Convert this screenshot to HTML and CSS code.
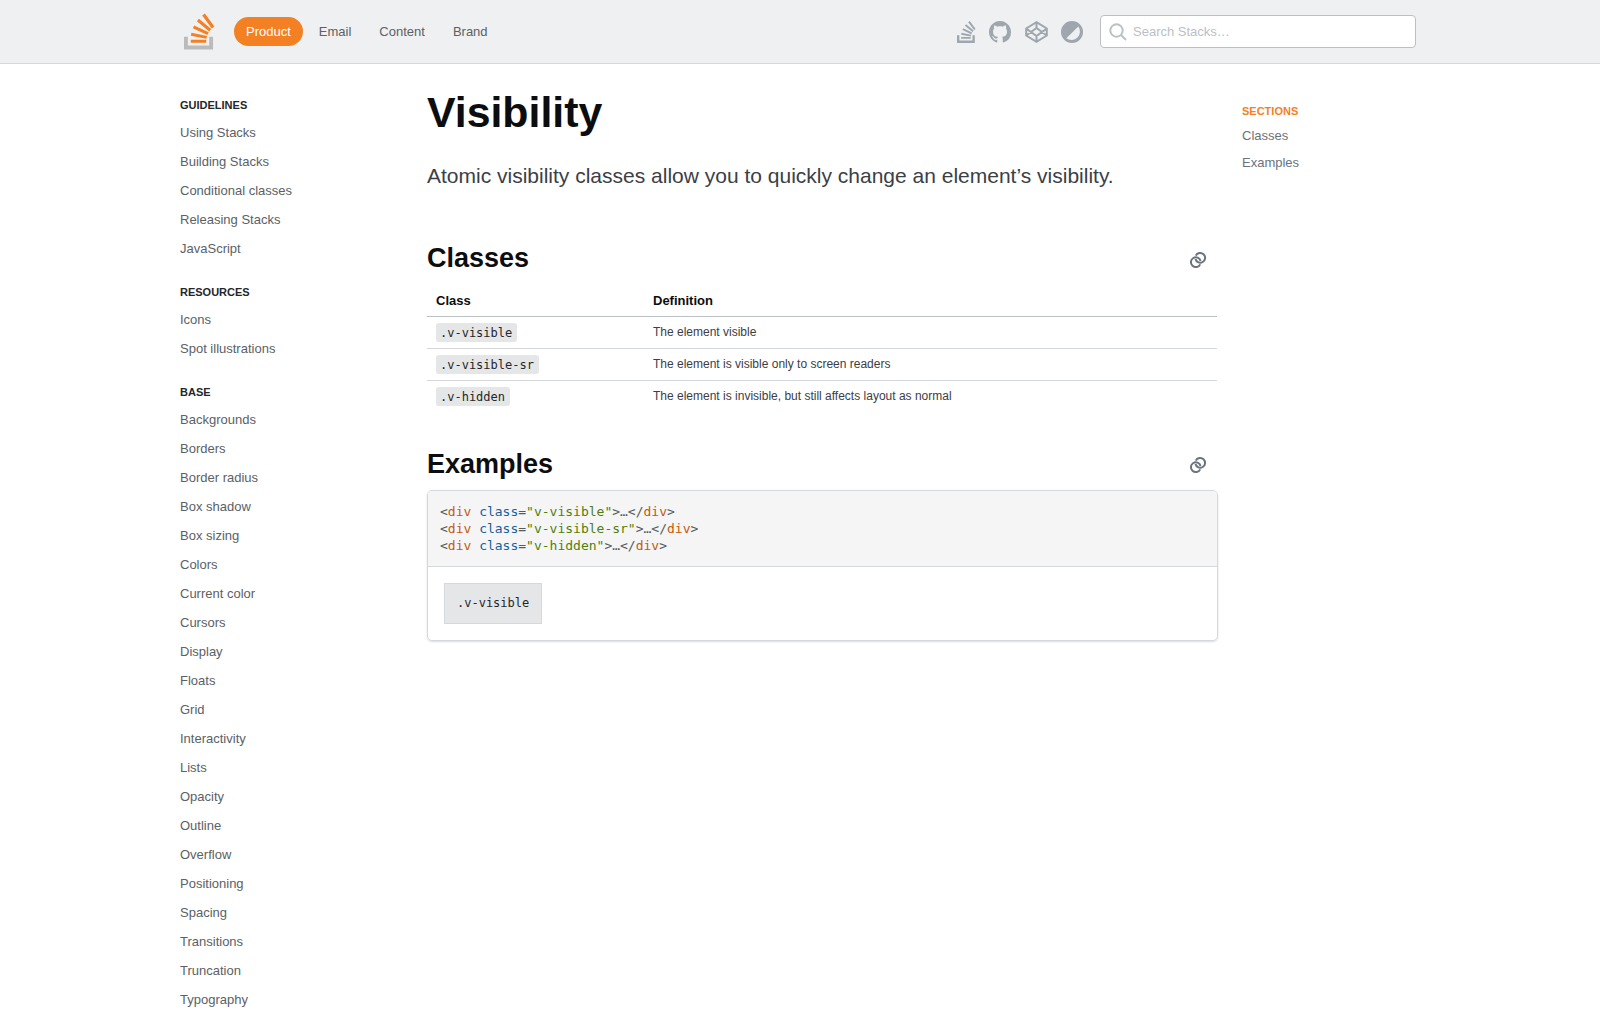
FILE: index.html
```html
<!DOCTYPE html>
<html lang="en">
<head>
    <meta charset="UTF-8">
    <meta name="viewport" content="width=device-width, initial-scale=1.0">
    <title>Visibility - Stacks</title>
    <link rel="stylesheet" href="styles.css">
</head>
<body>
    <header class="topbar">
        <div class="topbar-inner">
            <a class="logo" href="#">
                <svg width="31" height="37" viewBox="0 0 32 37"><path d="M26 33v-9h4v13H0V24h4v9h22Z" fill="#bcbbbb"/><path d="m21.5 0-2.7 2 9.9 13.3 2.7-2L21.5 0ZM26 18.4 13.3 7.8l2.1-2.5 12.7 10.6-2.1 2.5ZM9.1 15.2l15 7 1.4-3-15-7-1.4 3Zm14 10.79.68-2.95-16.1-3.35L7 23l16.1 2.99ZM23 30H7v-3h16v3Z" fill="#f48024"/></svg>
            </a>
            <nav class="topnav">
                <a class="topnav-item active" href="#">Product</a>
                <a class="topnav-item" href="#">Email</a>
                <a class="topnav-item" href="#">Content</a>
                <a class="topnav-item" href="#">Brand</a>
            </nav>
            <div class="top-icons">
                <svg class="so-icon" width="19" height="22" viewBox="0 0 32 37"><path d="M26 33v-9h4v13H0V24h4v9h22Z"/><path d="m21.5 0-2.7 2 9.9 13.3 2.7-2L21.5 0ZM26 18.4 13.3 7.8l2.1-2.5 12.7 10.6-2.1 2.5ZM9.1 15.2l15 7 1.4-3-15-7-1.4 3Zm14 10.79.68-2.95-16.1-3.35L7 23l16.1 2.99ZM23 30H7v-3h16v3Z"/></svg>
                <svg width="22" height="22" viewBox="0 0 16 16"><path d="M8 0C3.58 0 0 3.58 0 8c0 3.54 2.29 6.53 5.47 7.59.4.07.55-.17.55-.38 0-.19-.01-.82-.01-1.49-2.01.37-2.53-.49-2.69-.94-.09-.23-.48-.94-.82-1.13-.28-.15-.68-.52-.01-.53.63-.01 1.08.58 1.23.82.72 1.21 1.87.87 2.33.66.07-.52.28-.87.51-1.07-1.78-.2-3.64-.89-3.64-3.95 0-.87.31-1.59.82-2.15-.08-.2-.36-1.02.08-2.12 0 0 .67-.21 2.2.82.64-.18 1.32-.27 2-.27.68 0 1.36.09 2 .27 1.53-1.04 2.2-.82 2.2-.82.44 1.1.16 1.92.08 2.12.51.56.82 1.27.82 2.15 0 3.07-1.87 3.75-3.65 3.95.29.25.54.73.54 1.48 0 1.07-.01 1.93-.01 2.2 0 .21.15.46.55.38A8.013 8.013 0 0016 8c0-4.42-3.58-8-8-8z"/></svg>
                <svg class="pen" width="23" height="22" viewBox="0 0 23 22"><path d="M11.5 1.200 21.800 7.500v7L11.500 20.800 1.200 14.500v-7ZM11.500 1.200V7M11.500 15v5.800M1.200 7.500 11.500 15 21.800 7.500M1.200 14.500 11.500 7 21.800 14.500"/></svg>
                <svg class="contrast-icon" width="22" height="22" viewBox="0 0 22 22"><path fill-rule="evenodd" d="M11 0a11 11 0 1 1 0 22a11 11 0 0 1 0-22ZM17.300 5.400 5.400 17.300A8.500 8.500 0 0 0 17.300 5.400Z"/></svg>
            </div>
            <label class="search">
                <svg width="18" height="18" viewBox="0 0 18 18"><circle cx="7.500" cy="7.500" r="6.200"/><path d="M12 12l5 5"/></svg>
                <input type="text" placeholder="Search Stacks…">
            </label>
        </div>
    </header>

    <div class="layout">
        <aside class="sidebar">
            <h5>Guidelines</h5>
            <ul>
                <li>Using Stacks</li>
                <li>Building Stacks</li>
                <li>Conditional classes</li>
                <li>Releasing Stacks</li>
                <li>JavaScript</li>
            </ul>
            <h5>Resources</h5>
            <ul>
                <li>Icons</li>
                <li>Spot illustrations</li>
            </ul>
            <h5>Base</h5>
            <ul>
                <li>Backgrounds</li>
                <li>Borders</li>
                <li>Border radius</li>
                <li>Box shadow</li>
                <li>Box sizing</li>
                <li>Colors</li>
                <li>Current color</li>
                <li>Cursors</li>
                <li>Display</li>
                <li>Floats</li>
                <li>Grid</li>
                <li>Interactivity</li>
                <li>Lists</li>
                <li>Opacity</li>
                <li>Outline</li>
                <li>Overflow</li>
                <li>Positioning</li>
                <li>Spacing</li>
                <li>Transitions</li>
                <li>Truncation</li>
                <li>Typography</li>
                <li>Vertical alignment</li>
            </ul>
        </aside>

        <main class="content">
            <h1>Visibility</h1>
            <p class="lead">Atomic visibility classes allow you to quickly change an element’s visibility.</p>

            <div class="section-head classes-head">
                <h2>Classes</h2>
                <svg class="link-icon" width="18" height="18" viewBox="0 0 18 18"><path d="M6.780 4.680A4.900 4.900 0 1 1 6.450 8.020"/><path d="M11.220 13.320A4.900 4.900 0 1 1 11.550 9.980"/></svg>
            </div>
            <table class="class-table">
                <thead>
                    <tr><th class="col-class">Class</th><th>Definition</th></tr>
                </thead>
                <tbody>
                    <tr><td><code>.v-visible</code></td><td>The element visible</td></tr>
                    <tr><td><code>.v-visible-sr</code></td><td>The element is visible only to screen readers</td></tr>
                    <tr><td><code>.v-hidden</code></td><td>The element is invisible, but still affects layout as normal</td></tr>
                </tbody>
            </table>

            <div class="section-head examples-head">
                <h2>Examples</h2>
                <svg class="link-icon" width="18" height="18" viewBox="0 0 18 18"><path d="M6.780 4.680A4.900 4.900 0 1 1 6.450 8.020"/><path d="M11.220 13.320A4.900 4.900 0 1 1 11.550 9.980"/></svg>
            </div>
            <div class="example">
<pre class="example-code">&lt;<span class="tag">div</span> <span class="attr">class</span>=<span class="str">"v-visible"</span>&gt;…&lt;/<span class="tag">div</span>&gt;
&lt;<span class="tag">div</span> <span class="attr">class</span>=<span class="str">"v-visible-sr"</span>&gt;…&lt;/<span class="tag">div</span>&gt;
&lt;<span class="tag">div</span> <span class="attr">class</span>=<span class="str">"v-hidden"</span>&gt;…&lt;/<span class="tag">div</span>&gt;</pre>
                <div class="example-demo">
                    <div class="demo-box">.v-visible</div>
                </div>
            </div>
        </main>

        <aside class="toc">
            <h5>Sections</h5>
            <a href="#">Classes</a>
            <a href="#">Examples</a>
        </aside>
    </div>
</body>
</html>
```

FILE: styles.css
```css
html, body {
    height: 100%;
    overflow: hidden;
}
body {
    margin: 0;
    font-family: "Liberation Sans", Arial, sans-serif;
    color: #0c0d0e;
    background-color: #fff;
}
a {
    text-decoration: none;
}
.topbar {
    height: 63px;
    background-color: #eff0f1;
    border-bottom: 1px solid #d6d9dc;
}
.topbar-inner {
    width: 1236px;
    height: 100%;
    margin-left: 180px;
    display: flex;
    align-items: center;
}
.logo {
    display: flex;
    margin-left: 4px;
}
.topnav {
    display: flex;
    align-items: center;
    margin-left: 19px;
}
.topnav-item {
    font-size: 13px;
    line-height: 15px;
    padding: 7px 12px;
    margin-right: 4px;
    border-radius: 15px;
    color: #5a6167;
}
.topnav-item.active {
    background-color: #f48024;
    color: #fff;
}
.top-icons {
    margin-left: auto;
    display: flex;
    align-items: center;
    gap: 14px;
    fill: #9fa6ad;
}
.so-icon {
    margin-right: -1px;
}
.contrast-icon {
    margin-left: -1px;
}
.pen {
    fill: none;
    stroke: #9fa6ad;
    stroke-width: 2;
}
.search {
    width: 316px;
    height: 33px;
    box-sizing: border-box;
    margin-left: 17px;
    display: flex;
    align-items: center;
    gap: 6px;
    padding-left: 8px;
    background-color: #fff;
    border: 1px solid #bbc0c4;
    border-radius: 4px;
}
.search svg {
    fill: none;
    stroke: #bbc0c4;
    stroke-width: 2;
}
.search input {
    flex: 1;
    border: none;
    outline: none;
    padding: 0;
    font: 13px "Liberation Sans", Arial, sans-serif;
}
.search input::placeholder {
    color: #bbc0c4;
}
.layout {
    margin-left: 180px;
    display: flex;
}
.sidebar {
    width: 247px;
    padding-top: 34px;
}
.sidebar h5,
.toc h5 {
    margin: 0;
    font-size: 11px;
    line-height: 15px;
    font-weight: bold;
    text-transform: uppercase;
}
.sidebar h5 {
    color: #242729;
}
.sidebar ul {
    list-style: none;
    margin: 5px 0 22px;
    padding: 0;
}
.sidebar li {
    font-size: 13px;
    line-height: 15px;
    padding: 7px 0;
    color: #5a6167;
}
.content {
    width: 790px;
}
h1 {
    margin: 21px 0 0;
    font-size: 42.8px;
    line-height: 54px;
    font-weight: bold;
}
.lead {
    margin: 22px 0 0;
    font-size: 21px;
    line-height: 29px;
    color: #3b4045;
}
.section-head {
    display: flex;
    align-items: center;
    justify-content: space-between;
    padding-right: 10px;
}
.classes-head {
    margin-top: 50px;
}
.examples-head {
    margin-top: 34px;
}
h2 {
    margin: 0;
    font-size: 27px;
    line-height: 36px;
    font-weight: bold;
}
.link-icon {
    margin-top: 4px;
    fill: none;
    stroke: #6a737c;
    stroke-width: 2;
}
.examples-head .link-icon {
    margin-top: 2px;
}
.class-table {
    width: 100%;
    margin-top: 8px;
    border-collapse: collapse;
    font-size: 12px;
}
.class-table th {
    font-size: 13px;
    line-height: 15px;
    text-align: left;
    padding: 9px 9px 8px;
    border-bottom: 1px solid #bbc0c4;
}
.col-class {
    width: 199px;
}
.class-table td {
    line-height: 15px;
    padding: 8px 9px 6px;
    vertical-align: top;
    color: #3b4045;
    border-bottom: 1px solid #d6d9dc;
}
.class-table td:first-child {
    padding-top: 6px;
}
.class-table tr:last-child td {
    border-bottom: none;
}
code {
    display: inline-block;
    vertical-align: top;
    font: 12px/15px "DejaVu Sans Mono", monospace;
    color: #242729;
    background-color: #e4e6e8;
    padding: 3px 5px 1px 4px;
    border-radius: 3px;
}
.example {
    margin: 8px -1px 0 0;
    border: 1px solid #d6d9dc;
    border-radius: 5px;
    box-shadow: 0 1px 2px rgba(12, 13, 14, 0.15);
    overflow: hidden;
}
.example-code {
    margin: 0;
    padding: 12px;
    font: 13px/17px "DejaVu Sans Mono", monospace;
    color: #535a60;
    background-color: #f5f5f5;
    border-bottom: 1px solid #d6d9dc;
}
.tag {
    color: #c7580a;
}
.attr {
    color: #14619c;
}
.str {
    color: #4f7f0d;
}
.example-demo {
    padding: 16px;
}
.demo-box {
    display: inline-block;
    vertical-align: top;
    padding: 12px;
    font: 12px/15px "DejaVu Sans Mono", monospace;
    color: #242729;
    background-color: #e4e6e8;
    border: 1px solid #d6d9dc;
}
.toc {
    margin-left: 25px;
    padding-top: 40px;
    display: flex;
    flex-direction: column;
}
.toc h5 {
    color: #f48024;
    margin-bottom: 3px;
}
.toc a {
    font-size: 13px;
    line-height: 15px;
    padding: 6px 0;
    color: #6a737c;
}
```
